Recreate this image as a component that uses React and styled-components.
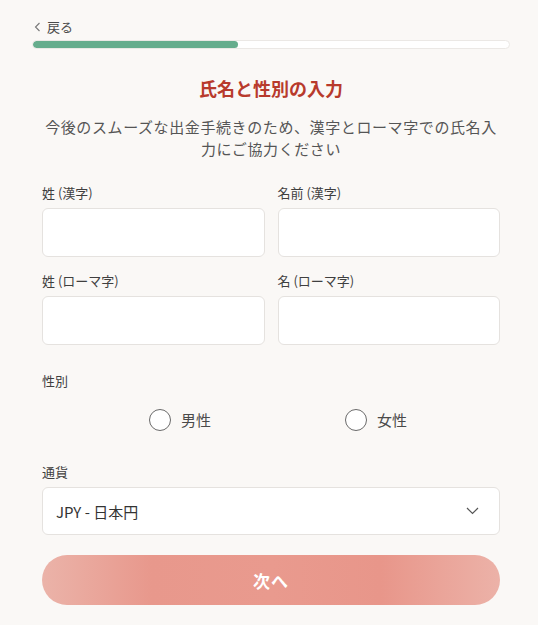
import React from "react";
import styled, { createGlobalStyle } from "styled-components";

const GlobalStyle = createGlobalStyle`
  html, body {
    margin: 0;
    padding: 0;
    background: #faf8f6;
    font-family: "Noto Sans CJK JP", "Noto Sans", sans-serif;
    color: #3f3f3f;
  }
  * { box-sizing: border-box; }
`;

const Page = styled.div`
  width: 538px;
  min-height: 625px;
  padding: 18px 28px 20px 32px;
`;

const BackLink = styled.a`
  display: flex;
  width: fit-content;
  align-items: center;
  gap: 6px;
  margin-left: 2px;
  height: 18px;
  font-size: 13px;
  line-height: 18px;
  color: #4a4a4a;
  cursor: pointer;
`;

const Progress = styled.div`
  margin-top: 4px;
  height: 9px;
  border-radius: 5px;
  background: #ffffff;
  border: 1px solid #ebe8e5;
  overflow: hidden;
`;

const ProgressFill = styled.div`
  height: 100%;
  background: #66ad8d;
  border-radius: 5px;
`;

const Form = styled.div`
  padding: 0 10px;
`;

const Title = styled.h1`
  margin: 27px 0 0;
  font-size: 18px;
  line-height: 24px;
  font-weight: 700;
  text-align: center;
  color: #b83a2c;
`;

const Subtitle = styled.p`
  margin: 16px 0 0;
  font-size: 15px;
  line-height: 22px;
  text-align: center;
  color: #555;
  letter-spacing: 0.6px;
`;

const FieldGrid = styled.div`
  margin-top: 24px;
  display: grid;
  grid-template-columns: 1fr 1fr;
  column-gap: 13px;
  row-gap: 15px;
`;

const Field = styled.div`
  display: flex;
  flex-direction: column;
  gap: 6px;
`;

const Label = styled.label`
  display: block;
  font-size: 13px;
  line-height: 18px;
  color: #3f3f3f;
  margin-top: ${(p) => p.$top || 0}px;
`;

const Input = styled.input`
  width: 100%;
  height: 49px;
  border: 1px solid #e5e2df;
  border-radius: 6px;
  background: #fff;
  padding: 0 12px;
  font-size: 15px;
  font-family: inherit;
  outline: none;
`;

const RadioRow = styled.div`
  margin-top: 19px;
  padding-left: 14px;
  display: flex;
  justify-content: center;
  gap: 134px;
`;

const RadioOption = styled.label`
  display: flex;
  align-items: center;
  gap: 10px;
  font-size: 15px;
  line-height: 22px;
  color: #4a4a4a;
  cursor: pointer;
`;

const RadioCircle = styled.span`
  width: 22px;
  height: 22px;
  border-radius: 50%;
  border: 1.3px solid #6a6a6a;
  background: #fff;
`;

const Select = styled.div`
  margin-top: 6px;
  height: 48px;
  border: 1px solid #e5e2df;
  border-radius: 6px;
  background: #fff;
  display: flex;
  align-items: center;
  justify-content: space-between;
  padding: 0 20px 0 13px;
  font-size: 15px;
  color: #333;
`;

const NextButton = styled.button`
  display: block;
  margin-top: 20px;
  width: 100%;
  height: 50px;
  border: none;
  border-radius: 25px;
  background: linear-gradient(
    90deg,
    #ebb3a9 0%,
    #e8988c 24%,
    #e99a8e 50%,
    #e8968a 74%,
    #ecb2a8 100%
  );
  color: #fff;
  font-family: inherit;
  font-size: 17px;
  font-weight: 700;
  letter-spacing: 1px;
  cursor: pointer;
`;

const ChevronLeft = () => (
  <svg width="7" height="10" viewBox="0 0 7 10">
    <polyline points="5.5,1 1.5,5 5.5,9" fill="none" stroke="#777" strokeWidth="1.1" />
  </svg>
);

const ChevronDown = () => (
  <svg width="13" height="8" viewBox="0 0 13 8">
    <polyline points="1,1 6.5,6.5 12,1" fill="none" stroke="#555" strokeWidth="1.2" />
  </svg>
);

const fields = ["姓 (漢字)", "名前 (漢字)", "姓 (ローマ字)", "名 (ローマ字)"];

export default function App() {
  const progress = 43;
  return (
    <Page>
      <GlobalStyle />
      <BackLink>
        <ChevronLeft />
        戻る
      </BackLink>
      <Progress>
        <ProgressFill style={{ width: `${progress}%` }} />
      </Progress>
      <Form>
        <Title>氏名と性別の入力</Title>
        <Subtitle>
          今後のスムーズな出金手続きのため、漢字とローマ字での氏名入力にご協力ください
        </Subtitle>
        <FieldGrid>
          {fields.map((f) => (
            <Field key={f}>
              <Label>{f}</Label>
              <Input type="text" />
            </Field>
          ))}
        </FieldGrid>
        <Label $top={27}>性別</Label>
        <RadioRow>
          <RadioOption>
            <RadioCircle />
            男性
          </RadioOption>
          <RadioOption>
            <RadioCircle />
            女性
          </RadioOption>
        </RadioRow>
        <Label $top={32}>通貨</Label>
        <Select>
          <span>JPY - 日本円</span>
          <ChevronDown />
        </Select>
        <NextButton>次へ</NextButton>
      </Form>
    </Page>
  );
}
